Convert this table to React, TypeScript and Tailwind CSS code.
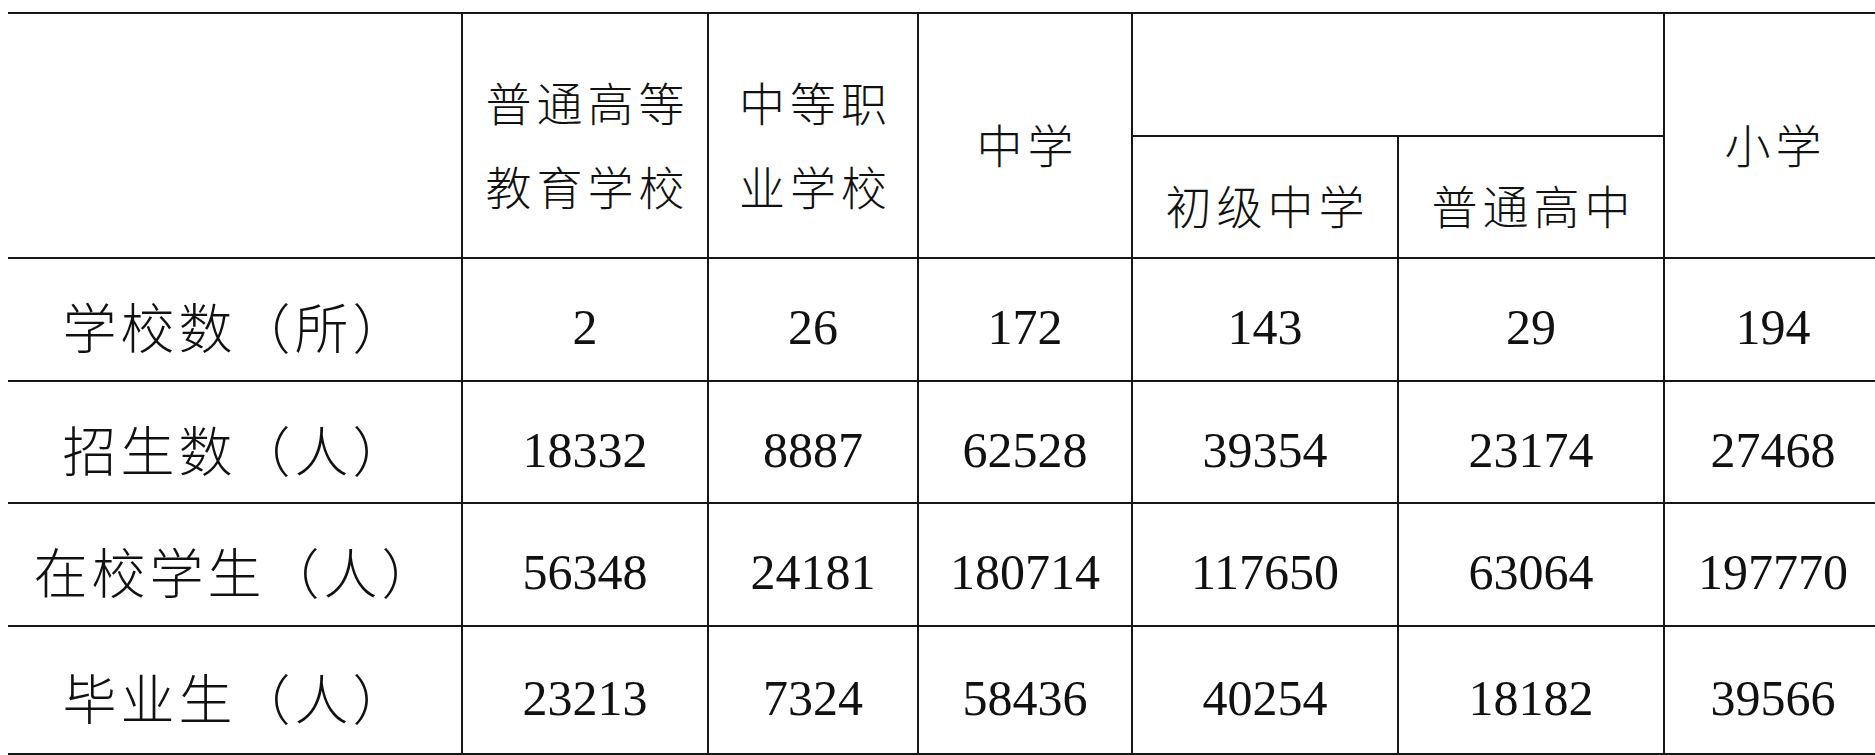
import React from "react";

const cjk = { fontFamily: '"Noto Sans CJK SC", serif' };
const num = { fontFamily: '"Liberation Serif"' };

const rows: { label: string; values: string[] }[] = [
  { label: "学校数（所）", values: ["2", "26", "172", "143", "29", "194"] },
  { label: "招生数（人）", values: ["18332", "8887", "62528", "39354", "23174", "27468"] },
  { label: "在校学生（人）", values: ["56348", "24181", "180714", "117650", "63064", "197770"] },
  { label: "毕业生（人）", values: ["23213", "7324", "58436", "40254", "18182", "39566"] },
];

function Head({ lines, className = "" }: { lines: string[]; className?: string }) {
  return (
    <div
      className={
        "flex flex-col items-center justify-center border-t-2 border-l-2 border-[#161616] pt-[14px] text-[46px] leading-[84px] tracking-[5px] pl-[5px] font-light " +
        className
      }
      style={cjk}
    >
      {lines.map((l) => (
        <span key={l} className="block whitespace-nowrap">
          {l}
        </span>
      ))}
    </div>
  );
}

export default function App() {
  return (
    <div className="w-[1875px] h-[755px] overflow-hidden bg-white text-[#111]" style={num}>
      <div className="ml-[8px] mt-[12px] w-[1873px] grid grid-cols-[453px_246px_210px_214px_266px_266px_218px] grid-rows-[123px_122px_123px_122px_123px_128px] border-b-2 border-[#161616]">
        <div className="row-span-2 border-t-2 border-[#161616]" />
        <Head lines={["普通高等", "教育学校"]} className="row-span-2" />
        <Head lines={["中等职", "业学校"]} className="row-span-2" />
        <Head lines={["中学"]} className="row-span-2" />
        <div className="col-span-2 border-t-2 border-l-2 border-[#161616]" />
        <Head lines={["小学"]} className="row-span-2" />
        <Head lines={["初级中学"]} />
        <Head lines={["普通高中"]} />

        {rows.map((r) => (
          <React.Fragment key={r.label}>
            <div
              className="flex items-center justify-center border-t-2 border-[#161616] pt-[12px] text-[54px] tracking-[4px] pl-[4px] font-light whitespace-nowrap"
              style={cjk}
            >
              {r.label}
            </div>
            {r.values.map((v, i) => (
              <div
                key={i}
                className="flex items-center justify-center border-t-2 border-l-2 border-[#161616] pt-[16px] text-[50px]"
                style={num}
              >
                {v}
              </div>
            ))}
          </React.Fragment>
        ))}
      </div>
    </div>
  );
}
